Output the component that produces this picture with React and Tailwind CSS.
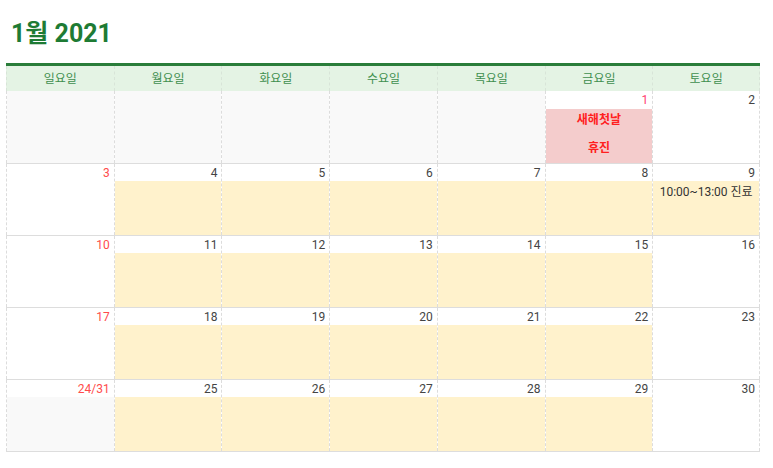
import React from "react";

const days = ["일요일", "월요일", "화요일", "수요일", "목요일", "금요일", "토요일"];

const W = "bg-white";
const G = "bg-[#f9f9f9]";
const Y = "bg-[#fff2cc]";

const rows = [
  [
    { d: "", top: G, bottom: G },
    { d: "", top: G, bottom: G },
    { d: "", top: G, bottom: G },
    { d: "", top: G, bottom: G },
    { d: "", top: G, bottom: G },
    { d: "1", color: "text-[#ff3d6e]", top: W, bottom: "bg-[#f4cccc]", holiday: true },
    { d: "2", top: W, bottom: W },
  ],
  [
    { d: "3", color: "text-[#ff4b4b]", top: W, bottom: W },
    { d: "4", top: W, bottom: Y },
    { d: "5", top: W, bottom: Y },
    { d: "6", top: W, bottom: Y },
    { d: "7", top: W, bottom: Y },
    { d: "8", top: W, bottom: Y },
    { d: "9", top: W, bottom: Y, event: "10:00~13:00 진료" },
  ],
  [
    { d: "10", color: "text-[#ff4b4b]", top: W, bottom: W },
    { d: "11", top: W, bottom: Y },
    { d: "12", top: W, bottom: Y },
    { d: "13", top: W, bottom: Y },
    { d: "14", top: W, bottom: Y },
    { d: "15", top: W, bottom: Y },
    { d: "16", top: W, bottom: W },
  ],
  [
    { d: "17", color: "text-[#ff4b4b]", top: W, bottom: W },
    { d: "18", top: W, bottom: Y },
    { d: "19", top: W, bottom: Y },
    { d: "20", top: W, bottom: Y },
    { d: "21", top: W, bottom: Y },
    { d: "22", top: W, bottom: Y },
    { d: "23", top: W, bottom: W },
  ],
  [
    { d: "24/31", color: "text-[#ff4b4b]", top: W, bottom: G },
    { d: "25", top: W, bottom: Y },
    { d: "26", top: W, bottom: Y },
    { d: "27", top: W, bottom: Y },
    { d: "28", top: W, bottom: Y },
    { d: "29", top: W, bottom: Y },
    { d: "30", top: W, bottom: W },
  ],
];

export default function App() {
  return (
    <div
      className="w-[773px] h-[468px] bg-white overflow-hidden"
      style={{ fontFamily: "Roboto, 'Noto Sans CJK KR', sans-serif" }}
    >
      <div className="pt-[18px] pl-[11px] h-[63px]">
        <h1 className="text-[25px] leading-[32px] font-bold text-[#1e7b34]">1월 2021</h1>
      </div>
      <div className="ml-[6px] w-[754px]">
        <div className="grid grid-cols-7 border-t-[3px] border-[#2a7d3a] bg-[#e4f3e4]">
          {days.map((d, i) => (
            <div
              key={d}
              className={`h-[25px] flex items-center justify-center text-[12px] text-[#3f8f4f] border-l border-dashed border-[#d8e4d8] ${i === 6 ? "border-r" : ""}`}
            >
              {d}
            </div>
          ))}
        </div>
        {rows.map((row, ri) => (
          <div
            key={ri}
            className={`grid grid-cols-7 ${ri > 0 ? "border-t border-[#dddddd]" : ""} ${ri === rows.length - 1 ? "border-b border-[#dddddd]" : ""}`}
          >
            {row.map((c, ci) => (
              <div
                key={ci}
                className={`flex flex-col border-l border-dashed border-[#dcdcdc] ${ci === 6 ? "border-r" : ""}`}
              >
                <div
                  className={`${ri === 0 ? "h-[18px]" : "h-[17px]"} ${c.top} text-right pr-[4px] text-[12px] leading-[18px] ${c.color || "text-[#444444]"}`}
                >
                  {c.d}
                </div>
                <div className={`h-[54px] ${c.bottom}`}>
                  {c.holiday && (
                    <div className="flex flex-col items-center text-[12px] font-bold text-[#ff2020]">
                      <div className="leading-[16px] mt-[3px]">새해첫날</div>
                      <div className="leading-[16px] mt-[12px]">휴진</div>
                    </div>
                  )}
                  {c.event && (
                    <div className="text-center text-[12px] leading-[16px] pt-[3px] text-[#333333]">
                      {c.event}
                    </div>
                  )}
                </div>
              </div>
            ))}
          </div>
        ))}
      </div>
    </div>
  );
}
